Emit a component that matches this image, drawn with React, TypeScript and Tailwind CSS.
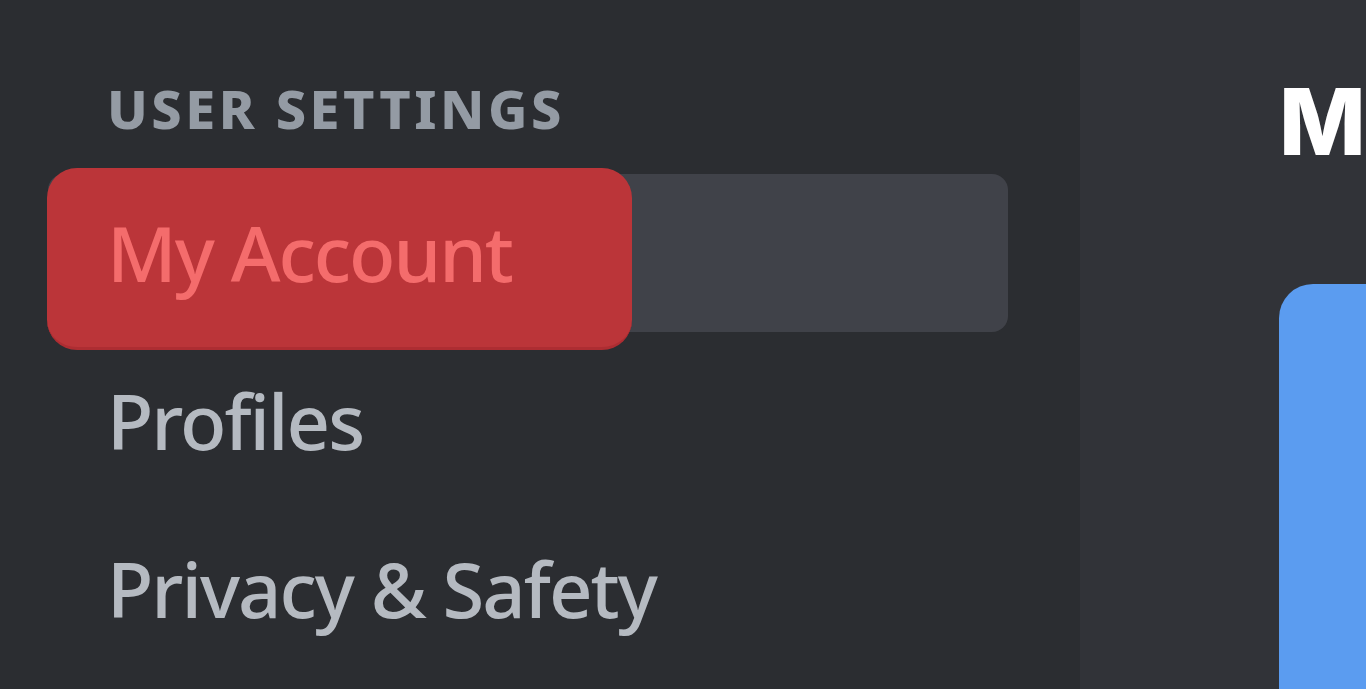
import React from "react";

const items = ["Profiles", "Privacy & Safety"];

export default function App() {
  return (
    <div className="flex h-[689px] w-[1366px] overflow-hidden bg-[#313338] font-['Noto_Sans',sans-serif]">
      {/* Sidebar */}
      <div className="w-[1080px] shrink-0 bg-[#2b2d31] pl-[48px] pr-[72px] pt-[78px]">
        <h2 className="pl-[59px] text-[54px] font-extrabold uppercase leading-[60px] tracking-[3.5px] text-[#949ba4]">
          User Settings
        </h2>

        <div className="mt-[36px] flex flex-col gap-[10px]">
          {/* Selected row with highlight */}
          <div className="relative flex h-[158px] items-center rounded-[16px] bg-[#404249] pl-[59px]">
            <div className="absolute -left-px -top-[6px] h-[182px] w-[585px] rounded-[30px] border-b-[3px] border-[#ad2d32] bg-[#bb3539]" />
            <span className="relative text-[76px] font-medium leading-none tracking-[-2px] text-[#f46c6c]">
              My Account
            </span>
          </div>

          {items.map((label) => (
            <div key={label} className="flex h-[158px] items-center rounded-[16px] pl-[59px]">
              <span className="text-[76px] font-medium leading-none tracking-[-2px] text-[#b5bac1]">{label}</span>
            </div>
          ))}
        </div>
      </div>

      {/* Content */}
      <div className="flex-1 pl-[199px] pt-[76px]">
        <h1 className="whitespace-nowrap font-['Inter',sans-serif] text-[92px] font-extrabold leading-none text-white">
          My Account
        </h1>
        <div className="mt-[116px] h-[500px] w-[600px] rounded-[34px] bg-[#5b9cf0]" />
      </div>
    </div>
  );
}
